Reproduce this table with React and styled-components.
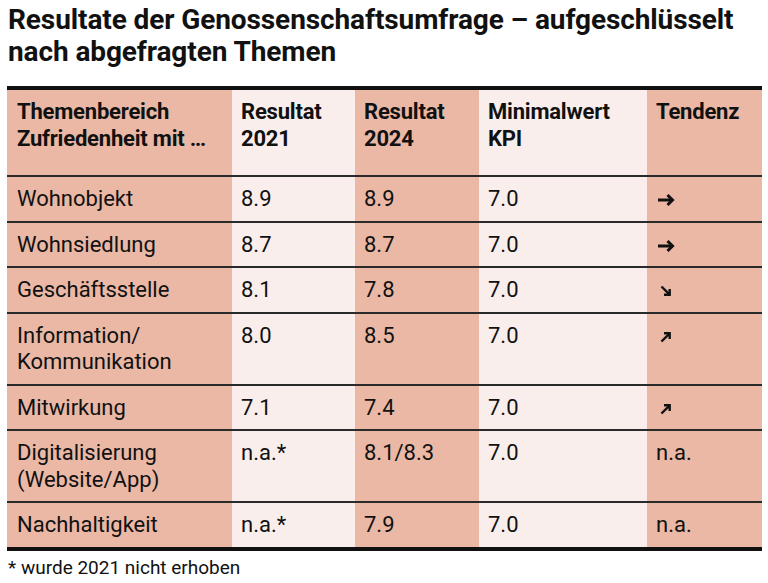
import React from 'react';
import styled, { createGlobalStyle } from 'styled-components';

const Global = createGlobalStyle`
  html, body {
    margin: 0;
    padding: 0;
    background: #ffffff;
  }
  body {
    font-family: Roboto, "Liberation Sans", sans-serif;
    color: #111;
  }
`;

const SALMON = '#eab8a5';
const LIGHT = '#faeeec';

const Page = styled.div`
  width: 768px;
  height: 583px;
  box-sizing: border-box;
  padding: 4px 6px 0 7px;
  overflow: hidden;
`;

const Title = styled.h1`
  margin: 0 0 0 1px;
  font-size: 28px;
  line-height: 32px;
  font-weight: 700;
  letter-spacing: -0.1px;
  color: #111;
`;

const Table = styled.table`
  margin-top: 18px;
  width: 755px;
  border-collapse: collapse;
  table-layout: fixed;
  border-top: 4px solid #111;
  border-bottom: 4px solid #111;
`;

const Col = styled.col`
  width: ${(p) => p.$w}px;
`;

const Cell = styled.td`
  background: ${(p) => (p.$light ? LIGHT : SALMON)};
  vertical-align: top;
  text-align: left;
  padding: 9px 9px 8px;
  padding-left: ${(p) => (p.$first ? '10px' : '9px')};
  font-size: 22px;
  line-height: 26.5px;
  font-weight: ${(p) => (p.$head ? 700 : 400)};
  letter-spacing: ${(p) => (p.$head ? '-0.2px' : '0')};
  color: #111;
  white-space: nowrap;
`;

const HeadRow = styled.tr`
  height: 88px;
  border-bottom: 2px solid #2a2a2a;
`;

const Row = styled.tr`
  border-bottom: 2px solid #2a2a2a;
  &:last-child {
    border-bottom: 0;
  }
`;

const Line = styled.div``;

const ArrowSvg = styled.svg`
  display: block;
  margin: 6px 0 0 1px;
`;

const Note = styled.p`
  margin: 5px 0 0 1px;
  font-size: 19px;
  line-height: 24px;
  color: #111;
`;

const Arrow = ({ dir }) => {
  const rot = dir === 'down' ? 45 : dir === 'up' ? -45 : 0;
  const s = dir === 'right' ? 1 : 0.8;
  return (
    <ArrowSvg width="18" height="16" viewBox="0 0 18 16">
      <g
        transform={`translate(9 8) rotate(${rot}) scale(${s}) translate(-9 -8)`}
        stroke="#111"
        strokeWidth="3"
        fill="none"
      >
        <path d="M1 8 H15.5" />
        <path d="M10.5 3 L15.5 8 L10.5 13" />
      </g>
    </ArrowSvg>
  );
};

const widths = [225, 123, 124, 168, 115];

const head = [
  ['Themenbereich', 'Zufriedenheit mit …'],
  ['Resultat', '2021'],
  ['Resultat', '2024'],
  ['Minimalwert', 'KPI'],
  ['Tendenz'],
];

const rows = [
  ['Wohnobjekt', '8.9', '8.9', '7.0', 'right'],
  ['Wohnsiedlung', '8.7', '8.7', '7.0', 'right'],
  ['Geschäftsstelle', '8.1', '7.8', '7.0', 'down'],
  [['Information/', 'Kommunikation'], '8.0', '8.5', '7.0', 'up'],
  ['Mitwirkung', '7.1', '7.4', '7.0', 'up'],
  [['Digitalisierung', '(Website/App)'], 'n.a.*', '8.1/8.3', '7.0', 'n.a.'],
  ['Nachhaltigkeit', 'n.a.*', '7.9', '7.0', 'n.a.'],
];

const lines = (v) => (Array.isArray(v) ? v.map((l, i) => <Line key={i}>{l}</Line>) : v);

export default function App() {
  return (
    <Page>
      <Global />
      <Title>
        Resultate der Genossenschaftsumfrage – aufgeschlüsselt
        <br />
        nach abgefragten Themen
      </Title>
      <Table>
        <colgroup>
          {widths.map((w, i) => (
            <Col key={i} $w={w} />
          ))}
        </colgroup>
        <thead>
          <HeadRow>
            {head.map((h, i) => (
              <Cell as="th" key={i} $head $first={i === 0} $light={i % 2 === 1}>
                {lines(h)}
              </Cell>
            ))}
          </HeadRow>
        </thead>
        <tbody>
          {rows.map((r, i) => (
            <Row key={i}>
              <Cell $first>{lines(r[0])}</Cell>
              <Cell $light>{r[1]}</Cell>
              <Cell>{r[2]}</Cell>
              <Cell $light>{r[3]}</Cell>
              <Cell>{r[4] === 'n.a.' ? 'n.a.' : <Arrow dir={r[4]} />}</Cell>
            </Row>
          ))}
        </tbody>
      </Table>
      <Note>* wurde 2021 nicht erhoben</Note>
    </Page>
  );
}
